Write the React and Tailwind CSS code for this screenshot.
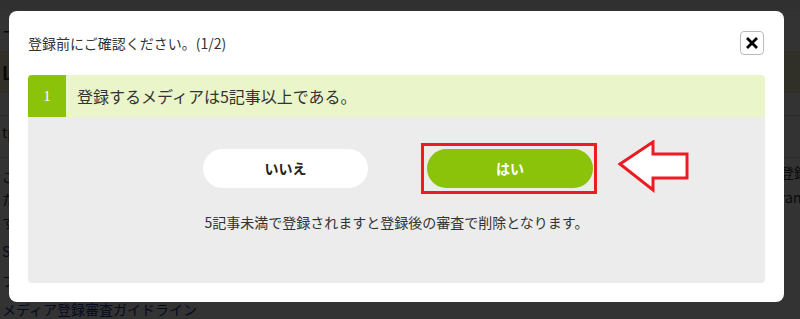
const FONT = { fontFamily: '"Noto Sans CJK JP", "Noto Sans", sans-serif' };

function BackgroundPage() {
  return (
    <div className="absolute inset-0 bg-white text-[#333] text-[14px]" style={FONT}>
      <div className="h-[10px] bg-[#f0f0f0]" />
      <div className="px-[2px] pt-[8px] text-[18px]">ー</div>
      <div className="mt-[6px] h-[42px] bg-[#f5f0c8] flex items-center px-[2px] text-[18px] font-bold">L</div>
      <div className="border-t border-[#ddd] mt-[22px] pt-[6px] px-[2px]">tp</div>
      <div className="border-t border-[#ddd] mt-[14px] pt-[8px] px-[2px] space-y-[2px]">
        <div>ご</div>
        <div>た</div>
        <div>す</div>
      </div>
      <div className="mt-[8px] px-[2px] text-[#1a3a9c] space-y-[8px]">
        <div>SNS</div>
        <div>プ</div>
        <div>メディア登録審査ガイドライン</div>
      </div>
      <div className="absolute right-0 top-[162px] w-[20px] space-y-[4px] overflow-hidden">
        <div className="whitespace-nowrap">登録</div>
        <div className="whitespace-nowrap">ran</div>
      </div>
    </div>
  );
}

function Arrow() {
  return (
    <svg width="74" height="56" viewBox="0 0 74 56" className="block">
      <polygon
        points="3,24 36,2 36,14 70,14 70,38 36,38 36,50"
        fill="#ffffff"
        stroke="#ec1c24"
        strokeWidth="3"
        strokeLinejoin="miter"
      />
    </svg>
  );
}

export default function App() {
  return (
    <div className="relative w-[800px] h-[319px] overflow-hidden" style={FONT}>
      <BackgroundPage />
      <div className="absolute inset-0 bg-black/80" />

      {/* Modal */}
      <div className="absolute left-[9px] top-[11px] w-[775px] h-[291px] bg-white rounded-[8px] px-[19px] pt-[20px] flex flex-col">
        <div className="flex items-center justify-between h-[24px]">
          <div className="text-[14px] text-[#333] leading-none">登録前にご確認ください。(1/2)</div>
          <button className="w-[24px] h-[24px] mr-[1px] border border-[#bbb] rounded-[4px] flex items-center justify-center bg-white">
            <svg width="12" height="12" viewBox="0 0 12 12">
              <path d="M2 2L10 10M10 2L2 10" stroke="#000" strokeWidth="2.8" strokeLinecap="square" />
            </svg>
          </button>
        </div>

        <div className="mt-[20px] w-[737px] rounded-[4px] overflow-hidden">
          <div className="flex h-[42px] bg-[#eaf6c9]">
            <div
              className="w-[38px] bg-[#8bc20a] text-white flex items-center justify-center text-[15px]"
              style={{ fontFamily: '"Liberation Serif", serif' }}
            >
              1
            </div>
            <div className="pl-[11px] flex items-center text-[16px] text-[#333]">登録するメディアは5記事以上である。</div>
          </div>

          <div className="bg-[#ececec] h-[166px] flex flex-col">
            <div className="flex items-center mt-[23px] ml-[175px]">
              <button className="w-[165px] h-[39px] rounded-full bg-white text-[14px] font-bold text-[#222]">いいえ</button>
              <div className="ml-[53px] border-[3px] border-[#ec1c24] p-[3px] pr-[1px]">
                <button className="w-[166px] h-[39px] rounded-full bg-[#8bc20a] text-[14px] font-bold text-white">はい</button>
              </div>
              <div className="ml-[20px]">
                <Arrow />
              </div>
            </div>
            <div className="mt-[16px] text-center text-[14px] text-[#333]">5記事未満で登録されますと登録後の審査で削除となります。</div>
          </div>
        </div>
      </div>
    </div>
  );
}
